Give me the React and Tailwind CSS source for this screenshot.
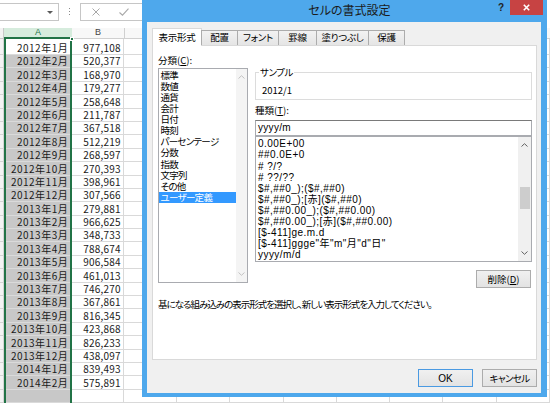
import React from "react";

const ROWS = [
  ["2012年1月", "977,108"], ["2012年2月", "520,377"], ["2012年3月", "168,970"],
  ["2012年4月", "179,277"], ["2012年5月", "258,648"], ["2012年6月", "211,787"],
  ["2012年7月", "367,518"], ["2012年8月", "512,219"], ["2012年9月", "268,597"],
  ["2012年10月", "270,393"], ["2012年11月", "398,961"], ["2012年12月", "307,566"],
  ["2013年1月", "279,881"], ["2013年2月", "966,625"], ["2013年3月", "348,733"],
  ["2013年4月", "788,674"], ["2013年5月", "906,584"], ["2013年6月", "461,013"],
  ["2013年7月", "746,270"], ["2013年8月", "367,861"], ["2013年9月", "816,345"],
  ["2013年10月", "423,868"], ["2013年11月", "826,233"], ["2013年12月", "438,097"],
  ["2014年1月", "839,493"], ["2014年2月", "575,891"], ["", ""],
];

const CATEGORIES = [
  "標準", "数値", "通貨", "会計", "日付", "時刻", "パーセンテージ",
  "分数", "指数", "文字列", "その他", "ユーザー定義",
];

const FORMATS = [
  "0.00E+00",
  "##0.0E+0",
  "# ?/?",
  "# ??/??",
  "$#,##0_);($#,##0)",
  "$#,##0_);[赤]($#,##0)",
  "$#,##0.00_);($#,##0.00)",
  "$#,##0.00_);[赤]($#,##0.00)",
  "[$-411]ge.m.d",
  '[$-411]ggge"年"m"月"d"日"',
  "yyyy/m/d",
];

const TABS = [
  ["表示形式", "w-[50px]"],
  ["配置", "w-[37px]"],
  ["フォント", "w-[42px]"],
  ["罫線", "w-[39px]"],
  ["塗りつぶし", "w-[53px]"],
  ["保護", "w-[37px]"],
];

const Chevron = ({ up, className }) => (
  <svg width="7" height="4" viewBox="0 0 7 4" className={className}>
    <path
      d={up ? "M0.5 3.5L3.5 0.7L6.5 3.5" : "M0.5 0.5L3.5 3.3L6.5 0.5"}
      fill="none"
      stroke="currentColor"
      strokeWidth="1"
    />
  </svg>
);

function Sheet() {
  return (
    <div className="flex flex-col">
      {/* formula bar */}
      <div className="h-[28px] flex items-start">
        <div className="mt-[3px] w-[59px] h-[18px] border border-l-0 border-[#c6c6c6] flex items-center justify-end pr-[5px]">
          <svg width="6" height="3" viewBox="0 0 6 3">
            <path d="M0 0h6L3 3z" fill="#5a5a5a" />
          </svg>
        </div>
        <div className="ml-[10px] mt-[8px] flex flex-col gap-[2px]">
          <div className="w-[1px] h-[1px] bg-[#8a8a8a]" />
          <div className="w-[1px] h-[1px] bg-[#8a8a8a]" />
          <div className="w-[1px] h-[1px] bg-[#8a8a8a]" />
        </div>
        <div className="ml-[10px] mt-[3px] w-[80px] h-[18px] border border-[#c6c6c6] flex items-center text-[#a8a8a8]">
          <svg width="8" height="8" viewBox="0 0 8 8" className="ml-[11px]">
            <path d="M0.5 0.5L7.5 7.5M7.5 0.5L0.5 7.5" stroke="currentColor" strokeWidth="1" />
          </svg>
          <svg width="10" height="8" viewBox="0 0 10 8" className="ml-[19px]">
            <path d="M0.5 4.5L3.5 7.2L9.5 0.7" fill="none" stroke="currentColor" strokeWidth="1.1" />
          </svg>
        </div>
      </div>

      {/* column headers */}
      <div className="h-[10.7px] flex text-[9px] leading-none font-['Liberation_Sans',sans-serif]">
        <div className="w-[4px] bg-[#f3f3f3] border-r border-b border-[#c9c9c9]" />
        <div className="w-[68px] bg-[#d6ecdd] border-b-2 border-[#217346] text-[#217346] flex items-center justify-center">
          A
        </div>
        <div className="w-[53px] bg-[#f8f8f8] border-r border-b border-[#d0d0d0] text-[#444] flex items-center justify-center">
          B
        </div>
        <div className="flex-1 bg-[#f8f8f8] border-b border-[#d0d0d0]" />
      </div>

      {/* rows */}
      {ROWS.map(([d, v], i) => (
        <div
          key={i}
          className={`${i === 0 ? "h-[16.3px]" : "h-[13.4px]"} flex text-[10px] leading-none text-[#1a1a1a] font-['Noto_Sans_CJK_JP',sans-serif]`}
        >
          <div className="w-[4px] bg-[#f3f3f3] border-r border-b border-[#d4d4d4]" />
          <div
            className={`w-[68px] ${i === 0 ? "bg-white" : "bg-[#c8c8c8]"} border-b border-[#dadada] flex items-end justify-end pr-[3px] pb-[1px] tracking-[0.5px]`}
          >
            {d}
          </div>
          <div className="w-[53px] border-r border-b border-[#d9d9d9] flex items-end justify-end pr-[2px] pb-[1px] tracking-[0.2px]">
            {v}
          </div>
          {Array.from({ length: 8 }).map((_, j) => (
            <div key={j} className="w-[53.3px] shrink-0 border-r border-b border-[#d9d9d9]" />
          ))}
        </div>
      ))}
    </div>
  );
}

function Button({ children, primary, className = "" }) {
  return (
    <div
      className={`h-[18px] w-[55px] flex items-center justify-center border ${
        primary ? "border-[#4a9ae2]" : "border-[#acacac]"
      } bg-gradient-to-b from-[#f0f0f0] to-[#e3e3e3] ${className}`}
    >
      {children}
    </div>
  );
}

function Dialog() {
  return (
    <div className="absolute left-[142px] top-0 w-[405px] h-[397px] bg-[#4ea8ec] flex flex-col font-['Noto_Sans_CJK_JP',sans-serif] [font-feature-settings:'palt'] text-black">
      {/* title bar */}
      <div className="h-[22px] relative flex items-start">
        <div className="flex-1 text-center pl-[10px] text-[12px] leading-[20px] text-[#1b1b1b]">
          セルの書式設定
        </div>
        <div className="absolute right-[4px] top-0 flex items-start">
          <div className="mr-[6px] mt-[2px] text-[10px] font-bold leading-[12px] text-[#222] font-['Liberation_Sans',sans-serif]">
            ?
          </div>
          <div className="w-[33px] h-[15px] bg-[#c74343] flex items-center justify-center">
            <svg width="7" height="7" viewBox="0 0 7 7">
              <path d="M0.8 0.8L6.2 6.2M6.2 0.8L0.8 6.2" stroke="white" strokeWidth="1.6" />
            </svg>
          </div>
        </div>
      </div>

      {/* body */}
      <div className="ml-[5px] w-[394px] h-[370.7px] bg-[#f0f0f0] pl-[5px] pt-[6px] flex flex-col text-[9.5px]">
        {/* tabs */}
        <div className="h-[17px] flex items-end relative z-10 tracking-[-0.3px]">
          {TABS.map(([label, w], i) =>
            i === 0 ? (
              <div
                key={label}
                className={`${w} h-[18px] -mb-[1px] bg-white border border-b-0 border-[#d9d9d9] flex items-center justify-center leading-none`}
              >
                {label}
              </div>
            ) : (
              <div
                key={label}
                className={`${w} h-[15px] -ml-[1px] bg-gradient-to-b from-[#f2f2f2] to-[#e5e5e5] border border-b-0 border-[#acacac] flex items-center justify-center leading-none`}
              >
                {label}
              </div>
            )
          )}
        </div>

        {/* panel */}
        <div className="w-[385px] h-[315px] bg-white border border-[#d9d9d9] flex flex-col">
          <div className="flex">
            {/* left column */}
            <div className="pl-[5px] flex flex-col">
              <div className="mt-[8.5px] h-[11px] leading-[11px]">
                分類(<span className="underline">C</span>):
              </div>
              <div className="mt-[2.5px] w-[90px] h-[215px] border border-[#a9abb0] flex">
                <div className="w-[77px] pt-[0.5px] flex flex-col tracking-[-0.7px]">
                  {CATEGORIES.map((c, i) => (
                    <div
                      key={c}
                      className={`h-[11.15px] leading-[11.15px] pl-[1.5px] whitespace-nowrap ${
                        i === CATEGORIES.length - 1 ? "bg-[#3399ff] text-white" : ""
                      }`}
                    >
                      {c}
                    </div>
                  ))}
                </div>
                <div className="flex-1 bg-[#f4f4f4] flex flex-col justify-between items-center py-[6px] text-[#c2c2c2]">
                  <Chevron up />
                  <Chevron />
                </div>
              </div>
            </div>

            {/* right column */}
            <div className="ml-[7px] w-[277px] flex flex-col">
              <div className="mt-[26px] h-[28px] border border-[#dcdcdc] relative pl-[6px] pt-[11.5px] leading-[11px]">
                <span className="absolute -top-[6px] left-[3px] bg-white px-[1px] leading-[11px] tracking-[-0.5px]">サンプル</span>
                2012/1
              </div>
              <div className="mt-[4.5px] h-[11px] leading-[11px]">
                種類(<span className="underline">T</span>):
              </div>
              <div className="mt-[4.5px] h-[15.5px] border border-[#a9abb0] border-t-[#7a7a7a] pl-[2px] leading-[13.5px] font-['Liberation_Sans',sans-serif] text-[10px] tracking-[0.3px]">
                yyyy/m
              </div>
              <div className="mt-[0.5px] h-[126px] border border-[#a9abb0] flex">
                <div className="flex-1 pt-[1.4px] pl-[2px] flex flex-col font-['Liberation_Sans','Noto_Sans_CJK_JP',sans-serif] text-[10px] tracking-[0.45px]">
                  {FORMATS.map((f) => (
                    <div key={f} className="h-[11.1px] leading-[11.1px] whitespace-nowrap">
                      {f}
                    </div>
                  ))}
                </div>
                <div className="w-[13px] bg-[#f0f0f0] flex flex-col text-[#606060]">
                  <div className="h-[16px] flex items-center justify-center">
                    <Chevron up />
                  </div>
                  <div className="flex-1 flex flex-col items-center">
                    <div className="mt-[34px] w-[10px] h-[22px] bg-[#cdcdcd]" />
                  </div>
                  <div className="h-[16px] flex items-center justify-center">
                    <Chevron />
                  </div>
                </div>
              </div>
              <div className="mt-[8px] self-end mr-[1px]">
                <Button>
                  削除(<span className="underline">D</span>)
                </Button>
              </div>
            </div>
          </div>

          <div className="pl-[5px] mt-[10.5px] leading-[11px] whitespace-nowrap tracking-[-1px]">
            基になる組み込みの表示形式を選択し、新しい表示形式を入力してください。
          </div>
        </div>

        {/* buttons */}
        <div className="w-[385px] mt-[9px] flex justify-end gap-[9px]">
          <Button primary>
            <span className="font-['Liberation_Sans',sans-serif] text-[10px]">OK</span>
          </Button>
          <Button>
            <span className="tracking-[-0.6px]">キャンセル</span>
          </Button>
        </div>
      </div>
    </div>
  );
}

export default function App() {
  return (
    <div className="relative w-[550px] h-[403px] overflow-hidden bg-white">
      <Sheet />
      {/* selection frame around column A */}
      <div className="absolute left-[4px] top-[38.7px] w-[68px] h-[380px] border-2 border-t-0 border-[#217346]" />
      <div className="absolute left-[69.5px] top-[37px] w-[4px] h-[4px] bg-[#217346] border border-white" />
      <Dialog />
    </div>
  );
}
